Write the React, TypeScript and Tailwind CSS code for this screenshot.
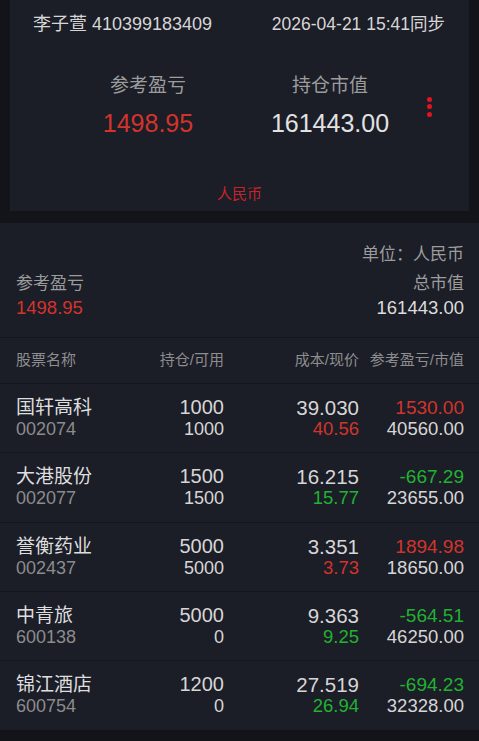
const FONT = '"Liberation Sans", "Noto Sans CJK SC", sans-serif'

const RED = "text-[#d2342c]"
const GREEN = "text-[#22b232]"

type Holding = {
  name: string
  code: string
  hold: string
  avail: string
  cost: string
  price: string
  pnl: string
  value: string
  up: boolean
}

const holdings: Holding[] = [
  { name: "国轩高科", code: "002074", hold: "1000", avail: "1000", cost: "39.030", price: "40.56", pnl: "1530.00", value: "40560.00", up: true },
  { name: "大港股份", code: "002077", hold: "1500", avail: "1500", cost: "16.215", price: "15.77", pnl: "-667.29", value: "23655.00", up: false },
  { name: "誉衡药业", code: "002437", hold: "5000", avail: "5000", cost: "3.351", price: "3.73", pnl: "1894.98", value: "18650.00", up: true },
  { name: "中青旅", code: "600138", hold: "5000", avail: "0", cost: "9.363", price: "9.25", pnl: "-564.51", value: "46250.00", up: false },
  { name: "锦江酒店", code: "600754", hold: "1200", avail: "0", cost: "27.519", price: "26.94", pnl: "-694.23", value: "32328.00", up: false },
]

function AccountCard() {
  return (
    <div className="mx-[10px] flex h-[211px] flex-col bg-[#1b1d27]">
      <div className="flex justify-between pl-[23px] pr-[24px] pt-[12px] text-[18px] leading-[24px] text-[#d6d6d6]">
        <span>李子萱 410399183409</span>
        <span className="text-[17.5px]">2026-04-21 15:41同步</span>
      </div>
      <div className="mt-[37px] flex items-center pl-[48px]">
        <div className="flex w-[180px] flex-col items-center">
          <span className="text-[19px] leading-[26px] text-[#9c9c9c]">参考盈亏</span>
          <span className={`mt-[9px] text-[25px] leading-[30px] ${RED}`}>1498.95</span>
        </div>
        <div className="ml-[2px] flex w-[180px] flex-col items-center">
          <span className="text-[19px] leading-[26px] text-[#9c9c9c]">持仓市值</span>
          <span className="mt-[9px] text-[25px] leading-[30px] text-[#e2e2e2]">161443.00</span>
        </div>
        <div className="ml-[7px] flex flex-col gap-[2.5px] pt-[2px]">
          <span className="size-[5px] rounded-full bg-[#e3141f]" />
          <span className="size-[5px] rounded-full bg-[#e3141f]" />
          <span className="size-[5px] rounded-full bg-[#e3141f]" />
        </div>
      </div>
      <div className="mt-auto pb-[7px] text-center text-[15px] leading-[20px] text-[#c4252a]">人民币</div>
    </div>
  )
}

function Summary() {
  return (
    <div className="flex h-[115px] flex-col border-b border-[#14161d] px-[15px] pl-[16px] pt-[21px]">
      <div className="text-right text-[17px] leading-[22px] text-[#9c9c9c]">单位：人民币</div>
      <div className="mt-[7px] flex items-start justify-between">
        <div className="flex flex-col">
          <span className="text-[17px] leading-[22px] text-[#9c9c9c]">参考盈亏</span>
          <span className={`mt-[1px] text-[18.5px] leading-[24px] ${RED}`}>1498.95</span>
        </div>
        <div className="flex flex-col items-end">
          <span className="text-[17px] leading-[22px] text-[#9c9c9c]">总市值</span>
          <span className="mt-[1px] text-[18.5px] leading-[24px] text-[#dcdcdc]">161443.00</span>
        </div>
      </div>
    </div>
  )
}

function HoldingRow({ h, last }: { h: Holding; last: boolean }) {
  const tone = h.up ? RED : GREEN
  return (
    <div
      className={`flex h-[69.3px] pl-[16px] pr-[15px] pt-[13px] ${last ? "" : "border-b border-[#14161d]"}`}
    >
      <div className="flex w-[120px] flex-col">
        <span className="text-[19px] leading-[21px] text-[#dedede]">{h.name}</span>
        <span className="text-[18px] leading-[22px] text-[#8c8c8c]">{h.code}</span>
      </div>
      <div className="flex w-[88px] flex-col items-end text-[#d6d6d6]">
        <span className="text-[20px] leading-[21px]">{h.hold}</span>
        <span className="text-[18px] leading-[22px]">{h.avail}</span>
      </div>
      <div className="flex w-[135px] flex-col items-end">
        <span className="text-[20.5px] leading-[21px] text-[#d6d6d6]">{h.cost}</span>
        <span className={`text-[18.5px] leading-[22px] ${tone}`}>{h.price}</span>
      </div>
      <div className="flex flex-1 flex-col items-end">
        <span className={`text-[19px] leading-[21px] ${tone}`}>{h.pnl}</span>
        <span className="text-[18.5px] leading-[22px] text-[#d6d6d6]">{h.value}</span>
      </div>
    </div>
  )
}

export default function App() {
  return (
    <div className="h-[741px] w-[479px] overflow-hidden bg-[#121419]" style={{ fontFamily: FONT }}>
      <AccountCard />
      <div className="mt-[12px] bg-[#1b1d27]">
        <Summary />
        <div className="flex h-[46px] items-center border-b border-[#14161d] pl-[16px] pr-[15px] text-[15px] text-[#8e8e8e]">
          <span className="w-[120px]">股票名称</span>
          <span className="w-[88px] text-right">持仓/可用</span>
          <span className="w-[135px] text-right">成本/现价</span>
          <span className="flex-1 text-right">参考盈亏/市值</span>
        </div>
        {holdings.map((h, i) => (
          <HoldingRow key={h.code} h={h} last={i === holdings.length - 1} />
        ))}
      </div>
    </div>
  )
}
